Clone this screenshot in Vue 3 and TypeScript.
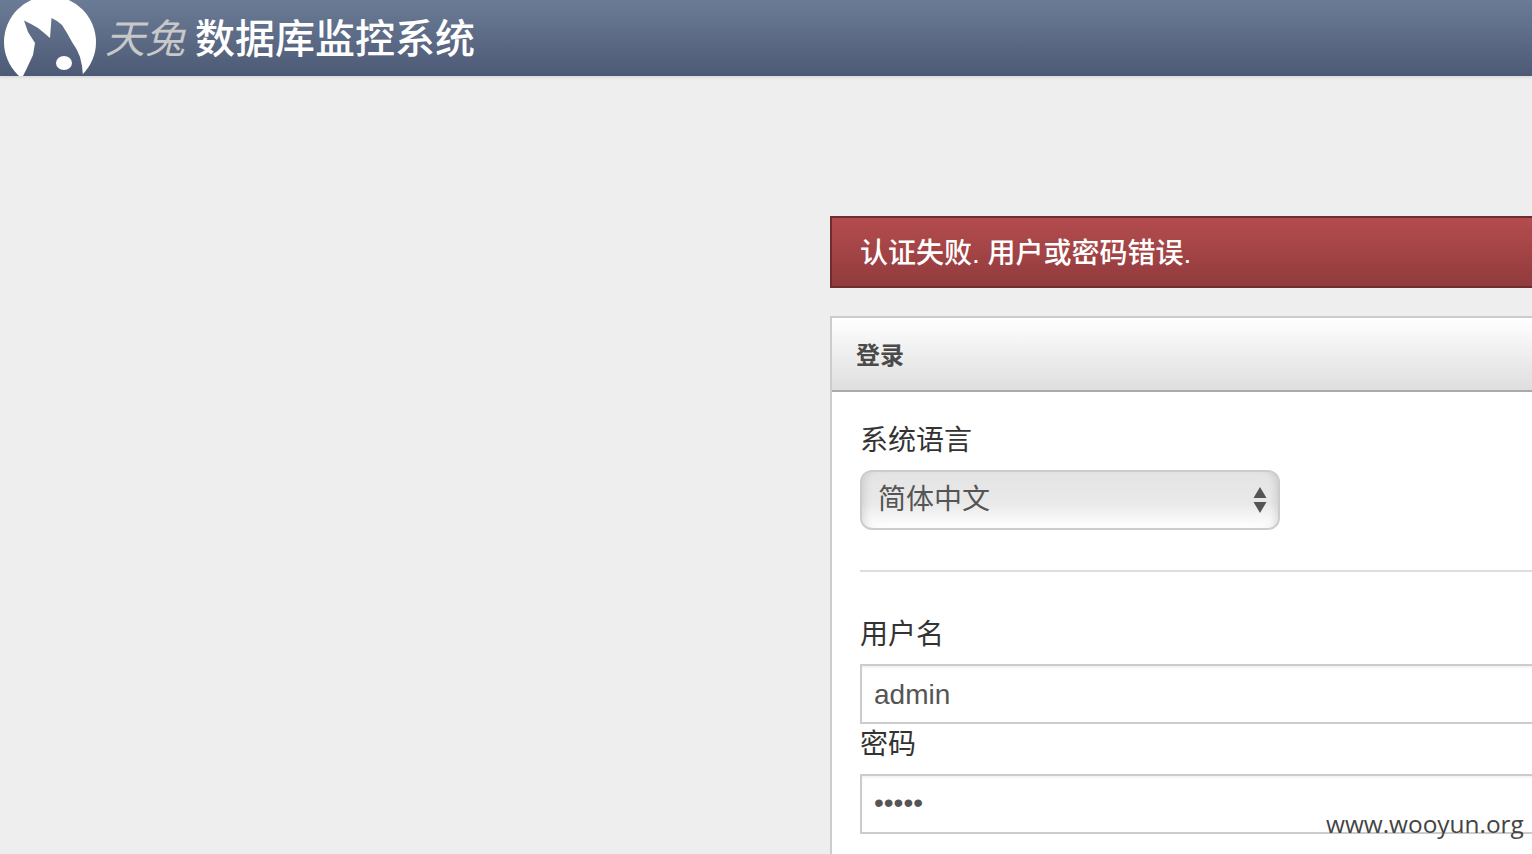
<script setup lang="ts">
const title = '数据库监控系统'
const languages: string[] = ['简体中文', 'English']
</script>

<template>
  <div class="page">
    <header class="topbar">
      <svg class="logo" width="100" height="76" viewBox="0 0 100 76" aria-label="天兔">
        <defs>
          <mask id="rabbit-mask">
            <rect width="100" height="76" fill="#000" />
            <circle cx="50" cy="42" r="46" fill="#fff" />
            <path d="M24 20.5 L31 24 L38 28 L43 32 L50 38 L51.5 18 L57 21 L62 25 L67 33 L72 42 L77 50 L80 57 L82 66 L83 76 L23 76 L27 68 L33 55 L35 43 L28 32 Z" fill="#000" />
            <ellipse cx="64" cy="63" rx="8" ry="7" fill="#fff" />
          </mask>
        </defs>
        <rect width="100" height="76" fill="#fff" mask="url(#rabbit-mask)" />
      </svg>
      <h1 class="brand"><em class="brand-name">天兔</em> <span>{{ title }}</span></h1>
    </header>

    <main class="content">
      <div class="alert">认证失败. 用户或密码错误.</div>

      <section class="panel">
        <div class="panel-head">登录</div>
        <form class="panel-body">
          <label class="label" for="lang">系统语言</label>
          <div class="select-wrap">
            <select id="lang" class="select">
              <option v-for="lang in languages" :key="lang">{{ lang }}</option>
            </select>
            <svg class="arrows" width="14" height="26" viewBox="0 0 14 26">
              <path d="M7 0 L13.5 11 L0.5 11 Z M0.5 15 L13.5 15 L7 26 Z" fill="#555" />
            </svg>
          </div>
          <hr class="divider" />
          <label class="label" for="user">用户名</label>
          <input id="user" class="input input-text" type="text" value="admin" />
          <label class="label" for="pass">密码</label>
          <input id="pass" class="input input-pass" type="password" value="admin" />
        </form>
      </section>
    </main>

    <div class="watermark">www.wooyun.org</div>
  </div>
</template>

<style>
html,
body {
  margin: 0;
  background: #eeeeee;
  overflow: hidden;
}
</style>

<style scoped>
.page {
  position: relative;
  width: 1532px;
  height: 854px;
  overflow: hidden;
  background: #eeeeee;
  font-family: "Liberation Sans", "Noto Sans CJK SC", sans-serif;
  color: #333;
}
.topbar {
  display: flex;
  align-items: center;
  height: 76px;
  background: linear-gradient(to bottom, #6b7b96, #4d5a75);
  box-shadow: 0 1px 3px rgba(0, 0, 0, 0.12);
}
.logo {
  flex: none;
  display: block;
}
.brand {
  margin: 0 0 0 5px;
  font-family: "Liberation Serif", "Noto Sans CJK SC", serif;
  font-size: 40px;
  font-weight: 500;
  line-height: 80px;
  height: 76px;
  color: #fff;
  white-space: nowrap;
}
.brand-name {
  font-style: italic;
  font-weight: 400;
  color: #c8c8c8;
}
.content {
  width: 900px;
  padding: 140px 0 0 830px;
}
.alert {
  height: 68px;
  line-height: 72px;
  padding-left: 28px;
  border: 2px solid #6f2d2f;
  background: linear-gradient(to bottom, #b44c4e, #913b3d);
  color: #fff;
  font-size: 28px;
  font-weight: 500;
}
.panel {
  margin-top: 28px;
  border: 2px solid #cccccc;
  background: #fff;
}
.panel-head {
  height: 72px;
  line-height: 75px;
  padding-left: 24px;
  border-bottom: 2px solid #aaaaaa;
  background: linear-gradient(to bottom, #ffffff, #dedede);
  color: #4a4a4a;
  font-size: 24px;
  font-weight: 700;
}
.panel-body {
  display: flex;
  flex-direction: column;
  align-items: flex-start;
  padding: 28px 0 120px 28px;
}
.label {
  display: block;
  height: 40px;
  line-height: 42px;
  margin-bottom: 10px;
  font-size: 28px;
  color: #333;
}
.select-wrap {
  position: relative;
  width: 420px;
  height: 60px;
}
.select {
  display: block;
  width: 100%;
  height: 100%;
  box-sizing: border-box;
  padding: 0 0 0 16px;
  appearance: none;
  border: 2px solid #cccccc;
  border-radius: 12px;
  background: linear-gradient(to bottom, #e4e4e4, #e9e9e9 55%, #ffffff);
  box-shadow: inset 8px 0 8px -6px rgba(0, 0, 0, 0.12), inset -8px 0 8px -6px rgba(0, 0, 0, 0.12);
  color: #555;
  font-family: inherit;
  font-size: 28px;
  line-height: 56px;
  outline: none;
}
.arrows {
  position: absolute;
  right: 13px;
  top: 17px;
  pointer-events: none;
}
.divider {
  align-self: stretch;
  height: 2px;
  margin: 40px 0 42px;
  border: 0;
  background: #dddddd;
}
.input {
  display: block;
  width: 100%;
  height: 60px;
  box-sizing: border-box;
  margin: 0;
  padding: 0 12px;
  border: 2px solid #cccccc;
  border-radius: 0;
  background: #fff;
  box-shadow: inset 0 2px 2px rgba(0, 0, 0, 0.05);
  color: #555;
  font-family: inherit;
  font-size: 28px;
  outline: none;
}
.input-text {
  padding-top: 2px;
}
.input-pass {
  padding-bottom: 2px;
}
.watermark {
  position: absolute;
  left: 1326px;
  top: 807px;
  font-family: "Open Sans", sans-serif;
  font-size: 24.4px;
  line-height: 34px;
  color: #444;
  white-space: nowrap;
}
</style>
